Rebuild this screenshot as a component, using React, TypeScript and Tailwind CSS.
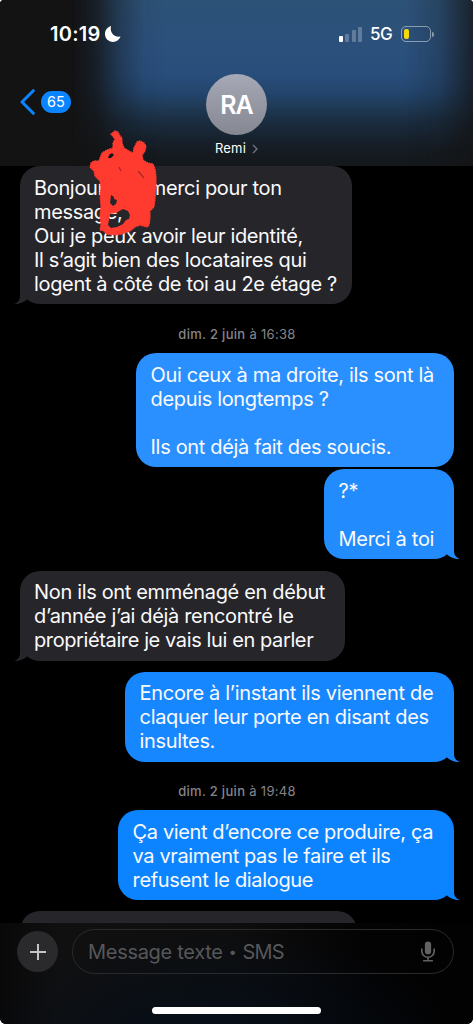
import React from "react";

type Side = "in" | "out";

function Tail({ side, color }: { side: Side; color: string }) {
  return (
    <svg
      viewBox="0 0 20 20"
      className={
        side === "out"
          ? "absolute -right-[6px] bottom-0 h-5 w-5"
          : "absolute -left-[6px] bottom-0 h-5 w-5 -scale-x-100"
      }
    >
      <path d="M14 0V12C14 15.8 16.2 18.8 20 20C15 20.4 10.5 18.5 7 15.6L5 8Z" fill={color} />
    </svg>
  );
}

type Line = { text: React.ReactNode; tracking?: string };

function Bubble({
  side,
  width,
  color,
  fill,
  lines,
  tail = true,
  padding = "pt-[9px] pb-[9px]",
  className = "",
}: {
  side: Side;
  width: string;
  color: string;
  fill: string;
  lines: Line[];
  tail?: boolean;
  padding?: string;
  className?: string;
}) {
  return (
    <div
      className={`relative shrink-0 rounded-[20px] ${padding} ${width} ${color} ${
        side === "out" ? "self-end pl-[14.6px]" : "self-start pl-[14px]"
      } ${className}`}
    >
      {tail && <Tail side={side} color={fill} />}
      {lines.map(({ text, tracking }, i) => (
        <p key={i} className={`relative h-6 whitespace-nowrap ${tracking ?? ""}`}>
          {text}
        </p>
      ))}
    </div>
  );
}

function Stamp({ day, time, className }: { day: string; time: string; className: string }) {
  return (
    <div
      className={`shrink-0 text-center text-[13px] leading-[16px] tracking-[0.3px] text-[#85858a] ${className}`}
    >
      <span className="font-medium">{day}</span> {time}
    </div>
  );
}

function Scribble() {
  const outline =
    "M31 13L35 10L38 11L40 15L42 17L42 22L44 27L49 30L53 32L54 27L57 21L60 20L64 22L66 25L65 30L62 34L63 39L68 42L73 43L75 48L76 55L76 65L75 78L74 86L70 90L70 97L69 104L67 106L60 104L55 106L50 110L42 113L34 114L27 113L24 110L20 109L21 104L20 95L21 85L20 73L21 67L20 60L15 55L14 50L10 46L11 42L14 40L19 40L20 37L22 32L27 29L33 27L33 22L35 18Z";
  return (
    <svg viewBox="0 0 90 120" className="absolute left-[80px] top-[121px] z-20 h-[120px] w-[90px]">
      <path
        fillRule="evenodd"
        fill="#ff3b30"
        d={`${outline}M29 34L32 32L34 34L31 37L28 37ZM31 74L34 76L34 78L37 79L36 83L33 85L30 82ZM30 93L36 92L43 88L48 90L50 94L49 98L46 99L43 103L37 106L31 107L28 104L29 99Z`}
      />
      <path d={outline} fill="none" stroke="#ff3b30" strokeWidth="1.4" strokeLinecap="round" strokeDasharray="0.5 1.9" />
      <path d="M39 46L41 50M58 50L64 57" stroke="#a52b29" strokeWidth="1.3" fill="none" />
    </svg>
  );
}

function Header() {
  return (
    <header className="relative flex h-[166px] shrink-0 flex-col bg-[#131314]">
      <div className="absolute inset-0 bg-[linear-gradient(to_bottom,#2d5277_0px,#2b507c_50px,#284d7a_76px,#23456d_93px,#1f3a56_107px,#1a2c3f_122px,#17222e_138px,#151b21_152px,#14181c_166px)] [mask-image:linear-gradient(to_right,transparent_72px,rgba(0,0,0,0.2)_96px,rgba(0,0,0,0.65)_120px,rgba(0,0,0,0.95)_144px,black_165px,black_405px,rgba(0,0,0,0.8)_438px,rgba(0,0,0,0.25)_473px)]" />
      <div className="relative flex h-[68px] items-center justify-between pl-[50px] pr-[39px]">
        <div className="flex items-center text-[20px] font-semibold leading-6 text-white">
          <span className="w-[55px] tracking-[0.25px]">10:19</span>
          <svg viewBox="0 0 16 16" className="h-4 w-4 fill-white">
            <path d="M6.1 0C4.6 5.8 8.2 11.6 15.6 10.6C14.1 14.1 11.5 16 8 16C3.5 16 0 12.6 0 8.1C0 4.2 2.4 1.1 6.1 0Z" />
          </svg>
        </div>
        <div className="flex items-center">
          <div className="flex h-[15px] items-end gap-[2.4px]">
            <i className="h-[6px] w-[4px] rounded-[1px] bg-white" />
            <i className="h-[8px] w-[4px] rounded-[1px] bg-white/25" />
            <i className="h-[12px] w-[4px] rounded-[1px] bg-white/25" />
            <i className="h-[15px] w-[4px] rounded-[1px] bg-white/25" />
          </div>
          <span className="ml-[8px] w-[22px] text-[17px] font-medium leading-5 tracking-[-0.4px] text-white">5G</span>
          <span className="ml-[9px] flex h-[16px] w-[30px] items-center rounded-[5px] border border-white/45 pl-[1.5px]">
            <i className="h-[10px] w-[5px] rounded-[2px] bg-[#f5d90a]" />
          </span>
          <i className="ml-[1px] h-[5px] w-[2px] rounded-r-full bg-white/45" />
        </div>
      </div>

      <div className="relative grid grid-cols-[1fr_auto_1fr] items-start pt-[6px]">
        <div className="flex items-center gap-[6px] pl-[20px] pt-[15px]">
          <svg viewBox="0 0 15 26" className="h-[26px] w-[15px] fill-none stroke-[#0a84ff] stroke-[3]">
            <path d="M13.3 1.7L2 13L13.3 24.3" strokeLinecap="round" strokeLinejoin="round" />
          </svg>
          <span className="flex h-[22px] w-[30px] items-center justify-center rounded-full bg-[#0a84ff] text-[14.5px] text-white">
            65
          </span>
        </div>
        <div className="flex flex-col items-center">
          <div className="flex h-[61px] w-[61px] items-center justify-center rounded-full bg-linear-to-b from-[#a6a9b6] to-[#858891] pt-[2px] text-[25px] font-semibold tracking-[-0.9px] text-white">
            RA
          </div>
          <div className="mt-[5px] flex items-center gap-[6px] text-[13px] leading-[17px] tracking-[0.2px] text-white">
            <span>Remi</span>
            <svg viewBox="0 0 6 10" className="h-[10px] w-[6px] fill-none stroke-[#6c737b] stroke-[1.4]">
              <path d="M1 1L5 5L1 9" />
            </svg>
          </div>
        </div>
        <span />
      </div>
    </header>
  );
}

function Composer() {
  return (
    <footer className="relative flex h-[101px] shrink-0 flex-col bg-[radial-gradient(ellipse_at_45%_120%,#050e19_0%,transparent_65%),linear-gradient(to_right,#080809_0px,#101011_60px,#0e0e0f_230px,#030304_370px,#020203_473px)]">
      <div className="flex items-center gap-[14px] pl-[17px] pt-[6px]">
        <div className="flex h-[41px] w-[41px] items-center justify-center rounded-full bg-[#2a2a2c]">
          <svg viewBox="0 0 16 16" className="h-4 w-4 stroke-[#c4c4c6] stroke-2">
            <path d="M8 0V16M0 8H16" />
          </svg>
        </div>
        <div className="flex h-[45px] w-[382px] items-center justify-between rounded-full border border-[#2a2a2c] pl-[15px] pr-[17px]">
          <span className="flex items-center whitespace-nowrap text-[20px] tracking-[-0.3px] text-[#57575a]">
            Message texte<span className="w-[20px] text-center text-[14px]">•</span>
            <span className="tracking-[-0.9px]">SMS</span>
          </span>
          <svg viewBox="0 0 16 22" className="h-[21px] w-4 fill-none stroke-[#626265] stroke-[1.7]">
            <rect x="4.7" y="0.6" width="6.6" height="13.4" rx="3.3" className="fill-[#626265] stroke-none" />
            <path d="M1.5 8.5V10.5C1.5 14.2 4.3 17 8 17C11.7 17 14.5 14.2 14.5 10.5V8.5M8 17V20.6M3.5 20.7H12.5" strokeLinecap="round" />
          </svg>
        </div>
      </div>
      <div className="mt-[33px] h-[7px] w-[169px] self-center rounded-full bg-white" />
    </footer>
  );
}

export default function App() {
  return (
    <div className="h-[1024px] w-[473px] overflow-hidden bg-white font-['Inter',sans-serif]">
      <div className="relative flex h-full flex-col overflow-hidden rounded-t-[4px] rounded-b-[6px] bg-black">
        <Header />
        <main className="flex min-h-0 flex-1 flex-col overflow-hidden pl-[20px] pr-[19px] text-[20px] leading-6 tracking-[-0.34px] text-[#fafafc]">
          <Bubble
            side="in"
            width="w-[332px]"
            color="bg-[#26252a]"
            fill="#26252a"
            padding="pt-[10px] pb-[8px]"
            lines={[
              { text: <>Bonjour<span className="inline-block w-[44px]" />merci pour ton</> },
              { text: "message," },
              { text: "Oui je peux avoir leur identité,", tracking: "tracking-[-0.38px]" },
              { text: "Il s’agit bien des locataires qui" },
              { text: "logent à côté de toi au 2e étage ?" },
            ]}
          />
          <Stamp day="dim. 2 juin" time="à 16:38" className="mt-[22px]" />
          <Bubble
            side="out"
            width="w-[318px]"
            color="bg-[#2a90ff]"
            fill="#2a90ff"
            tail={false}
            padding="pt-[10px] pb-[8px]"
            className="mt-[11px]"
            lines={[
              { text: "Oui ceux à ma droite, ils sont là" },
              { text: "depuis longtemps ?" },
              { text: "" },
              { text: "Ils ont déjà fait des soucis." },
            ]}
          />
          <Bubble
            side="out"
            width="w-[130px]"
            color="bg-[#228cff]"
            fill="#228cff"
            padding="pt-[10px] pb-[8px]"
            className="mt-[2px]"
            lines={[{ text: "?*" }, { text: "" }, { text: "Merci à toi", tracking: "tracking-[-0.3px]" }]}
          />
          <Bubble
            side="in"
            width="w-[325px]"
            color="bg-[#26252a]"
            fill="#26252a"
            className="mt-[12px]"
            lines={[
              { text: "Non ils ont emménagé en début" },
              { text: "d’année j’ai déjà rencontré le" },
              { text: "propriétaire je vais lui en parler", tracking: "tracking-[-0.39px]" },
            ]}
          />
          <Bubble
            side="out"
            width="w-[329px]"
            color="bg-[#1787ff]"
            fill="#1787ff"
            className="mt-[11px]"
            lines={[
              { text: "Encore à l’instant ils viennent de", tracking: "tracking-[-0.32px]" },
              { text: "claquer leur porte en disant des" },
              { text: "insultes." },
            ]}
          />
          <Stamp day="dim. 2 juin" time="à 19:48" className="mt-[21px]" />
          <Bubble
            side="out"
            width="w-[336px]"
            color="bg-[#0c84ff]"
            fill="#0c84ff"
            padding="pt-[10px] pb-[8px]"
            className="mt-[11px]"
            lines={[
              { text: "Ça vient d’encore ce produire, ça", tracking: "tracking-[-0.38px]" },
              { text: "va vraiment pas le faire et ils", tracking: "tracking-[-0.38px]" },
              { text: "refusent le dialogue" },
            ]}
          />
          <div className="mt-[11px] h-10 w-[337px] shrink-0 rounded-[20px] bg-[#26252a]" />
        </main>
        <Composer />
        <Scribble />
      </div>
    </div>
  );
}
